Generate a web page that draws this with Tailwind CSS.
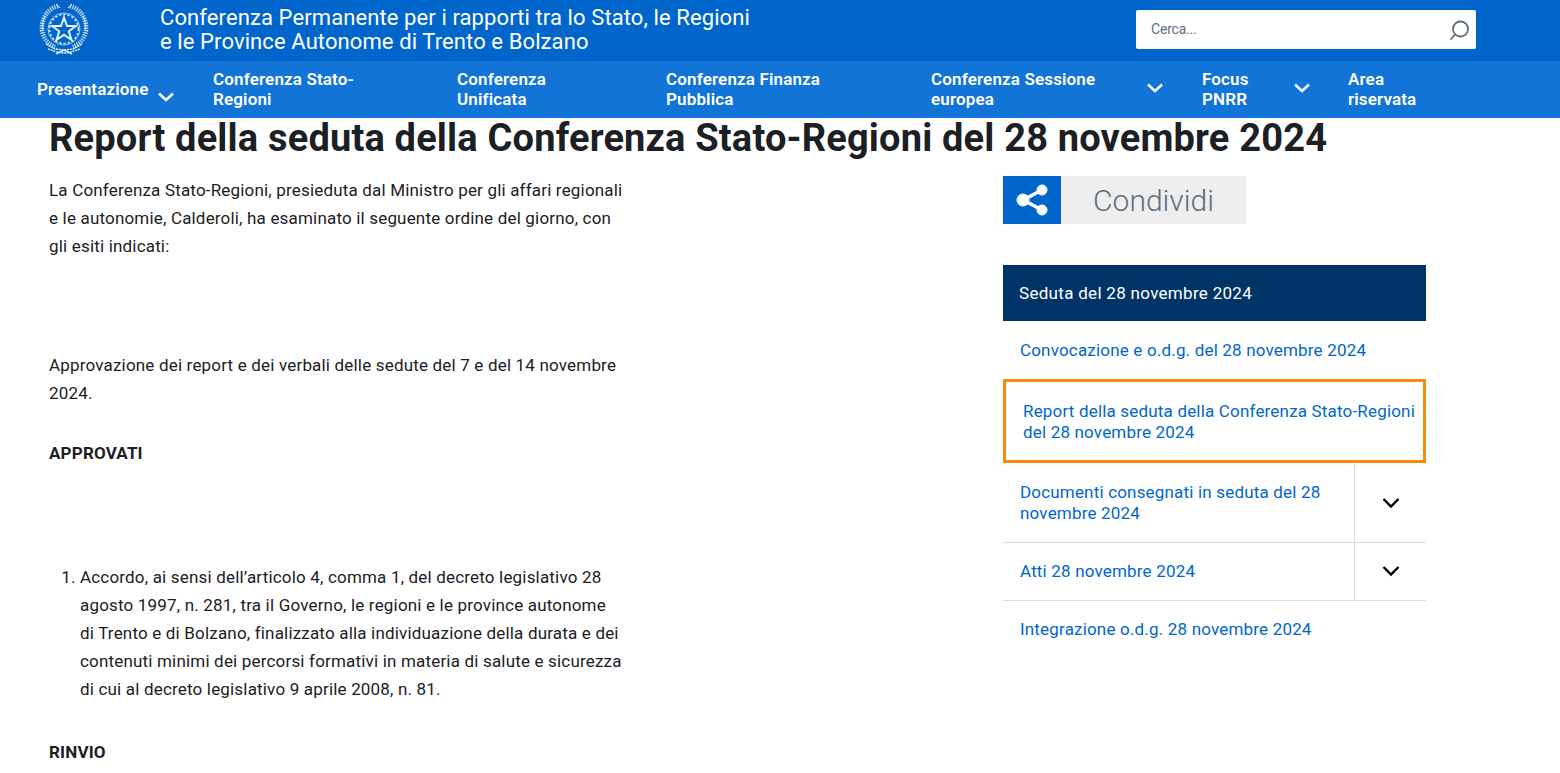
<!DOCTYPE html>
<html lang="it">
<head>
  <meta charset="UTF-8">
  <meta name="viewport" content="width=device-width, initial-scale=1.0">
  <title>Report della seduta</title>
  <script src="https://cdn.jsdelivr.net/npm/@tailwindcss/browser@4"></script>
</head>
<body class="h-screen overflow-hidden bg-white font-['Roboto',sans-serif] text-[#1c2024]">
  <!-- Header -->
  <header class="h-[61px] bg-[#0066cc] flex text-white">
    <div class="w-[160px] pl-[39px] pt-[2px] shrink-0">
      <svg class="w-[50px] h-[54px]" viewBox="0 0 50 54" fill="none" stroke="#e4eefa">
        <!-- wreath -->
        <path d="M19 4C8 7 2 17 3 28c1 8 6 14 13 17" stroke-width="4.5" stroke-dasharray="1.3 1.1" opacity="0.85"/>
        <path d="M31 4c11 3 17 13 16 24-1 8-6 14-13 17" stroke-width="4.5" stroke-dasharray="1.3 1.1" opacity="0.85"/>
        <path d="M17 2 21 6M33 2 29 6M6 14c-2 4-3 9-2 14M44 14c2 4 3 9 2 14" stroke-width="1"/>
        <!-- gear -->
        <circle cx="25" cy="27" r="16" stroke-width="0.7"/>
        <circle cx="25" cy="27" r="14.5" stroke-width="1.6" stroke-dasharray="2.2 2"/>
        <!-- star -->
        <path d="M25 15.5l3 8.4h9l-7.2 5.4 2.7 8.6-7.5-5.1-7.5 5.1 2.7-8.6-7.2-5.4h9z" stroke-width="2" fill="#0066cc"/>
        <!-- ribbon -->
        <path d="M7 42l9 5 9 1 9-1 9-5M9 47l9 3 7 1 7-1 9-3" stroke-width="1.5" stroke-dasharray="2 0.8"/>
        <path d="M17 52l8-4 8 4" stroke-width="1.4"/>
      </svg>
    </div>
    <div class="w-[976px] pt-[6px] text-[22px] leading-[24px] tracking-[0.1px] whitespace-nowrap">
      Conferenza Permanente per i rapporti tra lo Stato, le Regioni<br>e le Province Autonome di Trento e Bolzano
    </div>
    <div class="mt-[10px] w-[340px] h-[39px] bg-white rounded-[2px] flex items-center justify-between pl-[15px] pr-[6px]">
      <span class="text-[14px] tracking-[-0.2px] text-[#5c6f82]">Cerca...</span>
      <svg class="w-[22px] h-[22px]" viewBox="0 0 22 22" fill="none" stroke="#5c6f82" stroke-width="1.8">
        <circle cx="12.5" cy="10" r="7.5"/>
        <path d="M7 15.5 3 20" stroke-linecap="round"/>
      </svg>
    </div>
  </header>

  <!-- Nav -->
  <nav class="h-[57px] bg-[#1274d6] pl-[37px] pb-[2px] flex items-center text-white text-[17px] leading-[20px] tracking-[0.15px] font-semibold">
    <div class="w-[176px] flex items-center">
      <span>Presentazione</span>
      <svg class="ml-[10px] mt-[16px] w-[16px] h-[10px]" viewBox="0 0 16 10" fill="none" stroke="white" stroke-width="2.4"><path d="M1 1.5 8 8l7-6.5"/></svg>
    </div>
    <div class="w-[244px]">Conferenza Stato-<br>Regioni</div>
    <div class="w-[209px]">Conferenza<br>Unificata</div>
    <div class="w-[265px]">Conferenza Finanza<br>Pubblica</div>
    <div class="w-[271px] flex items-center">
      <span class="w-[216px]">Conferenza Sessione<br>europea</span>
      <svg class="mt-[-1px] w-[16px] h-[10px]" viewBox="0 0 16 10" fill="none" stroke="white" stroke-width="2.4"><path d="M1 1.5 8 8l7-6.5"/></svg>
    </div>
    <div class="w-[146px] flex items-center">
      <span class="w-[92px]">Focus<br>PNRR</span>
      <svg class="mt-[-1px] w-[16px] h-[10px]" viewBox="0 0 16 10" fill="none" stroke="white" stroke-width="2.4"><path d="M1 1.5 8 8l7-6.5"/></svg>
    </div>
    <div>Area<br>riservata</div>
  </nav>

  <main class="pl-[49px]">
    <h1 class="text-[38px] leading-[40px] tracking-[0.18px] font-bold text-[#1c2024] whitespace-nowrap">Report della seduta della Conferenza Stato-Regioni del 28 novembre 2024</h1>
    <div class="flex mt-[18px]">
      <!-- Article -->
      <article class="w-[954px] shrink-0 text-[17px] leading-[28px] tracking-[0.18px] whitespace-nowrap">
        <p>La Conferenza Stato-Regioni, presieduta dal Ministro per gli affari regionali<br>e le autonomie, Calderoli, ha esaminato il seguente ordine del giorno, con<br>gli esiti indicati:</p>
        <p class="mt-[91px]">Approvazione dei report e dei verbali delle sedute del 7 e del 14 novembre<br>2024.</p>
        <p class="mt-[32px] font-bold">APPROVATI</p>
        <ol class="mt-[96px] pl-[31px] list-decimal">
          <li>Accordo, ai sensi dell’articolo 4, comma 1, del decreto legislativo 28<br>agosto 1997, n. 281, tra il Governo, le regioni e le province autonome<br>di Trento e di Bolzano, finalizzato alla individuazione della durata e dei<br>contenuti minimi dei percorsi formativi in materia di salute e sicurezza<br>di cui al decreto legislativo 9 aprile 2008, n. 81.</li>
        </ol>
        <p class="mt-[35px] font-bold">RINVIO</p>
      </article>

      <!-- Sidebar -->
      <aside class="w-[423px] shrink-0">
        <div class="flex h-[48px]">
          <div class="w-[58px] bg-[#0066cc] flex items-center justify-center">
            <svg class="w-[34px] h-[34px]" viewBox="0 0 34 34" fill="white" stroke="white">
              <circle cx="27" cy="7" r="5"/><circle cx="27" cy="27" r="5"/><circle cx="8" cy="17" r="6"/>
              <path d="M8 17 27 7M8 17l19 10" stroke-width="3.5"/>
            </svg>
          </div>
          <div class="w-[185px] bg-[#eeeeee] flex items-center justify-center text-[30px] font-light text-[#5c6f82]">Condividi</div>
        </div>
        <div class="mt-[41px] h-[56px] bg-[#003366] text-white flex items-center pl-[16px] pt-[2px] text-[17px] tracking-[0.3px]">Seduta del 28 novembre 2024</div>
        <div class="text-[#0066cc] text-[17px] leading-[21px] tracking-[0.18px]">
          <div class="h-[58px] flex items-center pl-[17px]">Convocazione e o.d.g. del 28 novembre 2024</div>
          <div class="h-[84px] flex items-center pl-[17px] pt-[2px] border-[3px] border-[#f68b10] whitespace-nowrap">Report della seduta della Conferenza Stato-Regioni<br>del 28 novembre 2024</div>
          <div class="h-[80px] flex border-b border-[#dddddd]">
            <div class="w-[352px] flex items-center pl-[17px] border-r border-[#dddddd]">Documenti consegnati in seduta del 28<br>novembre 2024</div>
            <div class="flex-1 flex items-center justify-center">
              <svg class="w-[18px] h-[12px]" viewBox="0 0 18 12" fill="none" stroke="black" stroke-width="2.4"><path d="M1.5 2 9 9.5 16.5 2"/></svg>
            </div>
          </div>
          <div class="h-[58px] flex border-b border-[#dddddd]">
            <div class="w-[352px] flex items-center pl-[17px] border-r border-[#dddddd]">Atti 28 novembre 2024</div>
            <div class="flex-1 flex items-center justify-center">
              <svg class="w-[18px] h-[12px] mt-[-2px]" viewBox="0 0 18 12" fill="none" stroke="black" stroke-width="2.4"><path d="M1.5 2 9 9.5 16.5 2"/></svg>
            </div>
          </div>
          <div class="h-[56px] flex items-center pl-[17px]">Integrazione o.d.g. 28 novembre 2024</div>
        </div>
      </aside>
    </div>
  </main>
</body>
</html>
